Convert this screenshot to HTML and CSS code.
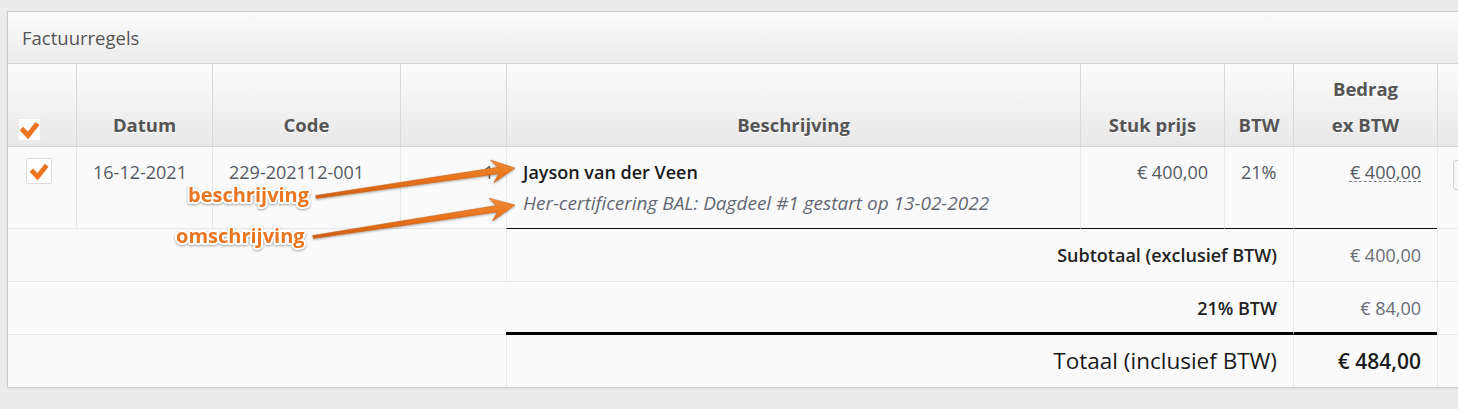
FILE: index.html
```html
<!DOCTYPE html>
<html lang="nl">
<head>
<meta charset="utf-8">
<title>Factuurregels</title>
<link rel="stylesheet" href="styles.css">
</head>
<body>
<div class="panel">
  <div class="panel-heading">Factuurregels</div>
  <table class="lines">
    <colgroup>
      <col class="w-check">
      <col class="w-date">
      <col class="w-code">
      <col class="w-qty">
      <col class="w-desc">
      <col class="w-price">
      <col class="w-vat">
      <col class="w-amount">
      <col class="w-actions">
    </colgroup>
    <thead>
      <tr>
        <th class="c-check"><span class="cb cb-head"><svg viewBox="0 0 23 23" width="23" height="23"><path d="M3.5 10.5 L10 17.5 L19.5 5.5" fill="none" stroke="#ec7420" stroke-width="5" stroke-linejoin="miter"/></svg></span></th>
        <th>Datum</th>
        <th>Code</th>
        <th></th>
        <th>Beschrijving</th>
        <th>Stuk prijs</th>
        <th>BTW</th>
        <th>Bedrag<br>ex BTW</th>
        <th class="c-actions"></th>
      </tr>
    </thead>
    <tbody>
      <tr class="line">
        <td class="c-check"><span class="cb cb-row"><svg viewBox="0 0 23 23" width="22" height="22"><path d="M3.5 10.5 L10 17.5 L19.5 5.5" fill="none" stroke="#ec7420" stroke-width="5" stroke-linejoin="miter"/></svg></span></td>
        <td>16-12-2021</td>
        <td>229-202112-001</td>
        <td class="num">1</td>
        <td class="desc end">
          <div class="desc-name">Jayson van der Veen</div>
          <div class="desc-note">Her-certificering BAL: Dagdeel #1 gestart op 13-02-2022</div>
        </td>
        <td class="num end">€ 400,00</td>
        <td class="end">21%</td>
        <td class="num end"><span class="dashed">€ 400,00</span></td>
        <td class="c-actions"><span class="btn-stub"></span></td>
      </tr>
      <tr class="sum">
        <td colspan="4" class="blank"></td>
        <td colspan="3" class="sum-label ruled">Subtotaal (exclusief BTW)</td>
        <td class="sum-value">€ 400,00</td>
        <td class="c-actions"></td>
      </tr>
      <tr class="sum vat">
        <td colspan="4" class="blank"></td>
        <td colspan="3" class="sum-label heavy">21% BTW</td>
        <td class="sum-value heavy">€ 84,00</td>
        <td class="c-actions"></td>
      </tr>
      <tr class="sum total">
        <td colspan="4" class="blank"></td>
        <td colspan="3" class="sum-label ruled">Totaal (inclusief BTW)</td>
        <td class="sum-value">€ 484,00</td>
        <td class="c-actions"></td>
      </tr>
    </tbody>
  </table>
</div>

<svg class="annotations" width="1458" height="409" viewBox="0 0 1458 409">
  <defs>
    <linearGradient id="arrowFill" x1="0" y1="0" x2="0" y2="1">
      <stop offset="0" stop-color="#f08a34"/>
      <stop offset="0.5" stop-color="#e8721c"/>
      <stop offset="1" stop-color="#cf5f12"/>
    </linearGradient>
    <filter id="soft" x="-10%" y="-30%" width="120%" height="160%">
      <feDropShadow dx="0" dy="1" stdDeviation="0.8" flood-color="#000" flood-opacity="0.35"/>
    </filter>
  </defs>
  <polygon filter="url(#soft)" fill="url(#arrowFill)" stroke="#c45a10" stroke-width="0.5"
    points="315.6,195.5 497.8,167.3 490.5,160 515,168 493.9,182.8 498.6,173.7 316.4,198.5"/>
  <polygon filter="url(#soft)" fill="url(#arrowFill)" stroke="#c45a10" stroke-width="0.5"
    points="312.6,235.5 496.3,205.5 489.1,198.2 515,205 492.5,221 497.3,211.9 313.4,238.5"/>
  <text class="label" x="188" y="202">beschrijving</text>
  <text class="label" x="176" y="243">omschrijving</text>
</svg>
</body>
</html>
```

FILE: styles.css
```css
html, body {
  margin: 0;
  height: 409px;
  overflow: hidden;
}

body {
  position: relative;
  background: #ececec;
  font-family: "Open Sans", "Liberation Sans", sans-serif;
  color: #555a63;
}

.panel {
  margin: 11px 0 0 7px;
  width: 1521px;
  border: 1px solid #cbcbcb;
  background: #fafafa;
  box-shadow: 0 1px 2px rgba(0, 0, 0, 0.08);
}

.panel-heading {
  height: 51px;
  padding-left: 14px;
  display: flex;
  align-items: center;
  font-size: 18.5px;
  color: #555;
  background: linear-gradient(#fbfbfb, #ececec);
  border-bottom: 1px solid #d0d0d0;
}

.lines {
  table-layout: fixed;
  width: 1519px;
  border-collapse: separate;
  border-spacing: 0;
}

.w-check { width: 68px; }
.w-date { width: 136px; }
.w-code { width: 188px; }
.w-qty { width: 106px; }
.w-desc { width: 574px; }
.w-price { width: 144px; }
.w-vat { width: 69px; }
.w-amount { width: 144px; }
.w-actions { width: 90px; }

th, td {
  box-sizing: border-box;
}

th {
  font-weight: 700;
  font-size: 18.5px;
  color: #555;
  text-shadow: 0 1px 0 #fff;
  line-height: 36px;
  padding: 7px 4px 3px;
  vertical-align: bottom;
  text-align: center;
  background: linear-gradient(#fcfcfc, #e8e8e8);
  border-left: 1px solid #d8d8e0;
  border-bottom: 1px solid #d3d3db;
}

th.c-check {
  border-left: none;
  text-align: left;
  padding: 0 0 5px 10px;
}

.cb {
  display: block;
  background: #fff;
  box-sizing: border-box;
}

.cb svg {
  display: block;
}

.cb-head {
  width: 23px;
  height: 23px;
  border: 1px solid #ececec;
}

.cb-head svg {
  margin: -1px;
}

.cb-row {
  width: 26px;
  height: 26px;
  border: 1px solid #dcdcdc;
  border-radius: 2px;
  padding: 1px;
}

td {
  font-size: 18px;
  line-height: 31px;
  padding: 10px 16px 9px;
  vertical-align: top;
  border-left: 1px solid #e6e6ec;
  border-bottom: 1px solid #e6e6ec;
  white-space: nowrap;
}

td.c-check {
  border-left: none;
  padding: 11px 0 0 18px;
}

td.num {
  text-align: right;
}

.line td.end {
  border-bottom-color: #111;
}

.line td.num:nth-child(4) {
  padding-right: 12px;
}

.desc-name {
  color: #1a1a1a;
  font-weight: 600;
  font-size: 18px;
}

.desc-note {
  font-style: italic;
  font-size: 19px;
  color: #646872;
}

.dashed {
  text-decoration: underline dashed #7a7e86;
  text-decoration-thickness: 1px;
  text-underline-offset: 2px;
}

.btn-stub {
  display: block;
  width: 50px;
  height: 30px;
  margin-top: 3px;
  box-sizing: border-box;
  border: 1px solid #cfcfcf;
  border-radius: 3px;
  background: #f7f7f7;
}

td.c-actions {
  padding-left: 15px;
  padding-right: 0;
}

.sum td {
  vertical-align: middle;
  padding-top: 10px;
  padding-bottom: 10px;
  line-height: 32px;
}

.sum td.blank {
  border-left: none;
}

.sum-label {
  text-align: right;
  font-weight: 600;
  color: #222;
  font-size: 18px;
}

.sum-value {
  text-align: right;
  color: #6a6e77;
}

.vat .sum-label {
  border-left: none;
}

.vat td.heavy {
  border-bottom: 3px solid #000;
  padding-bottom: 8px;
}

.total td {
  border-bottom: none;
}

.total .sum-label {
  font-weight: 500;
  font-size: 22.5px;
  color: #1a1a1a;
}

.total .sum-value {
  font-weight: 600;
  font-size: 21px;
  color: #1a1a1a;
}

.annotations {
  position: absolute;
  left: 0;
  top: 0;
  pointer-events: none;
}

.annotations .label {
  font-family: "Open Sans", "Liberation Sans", sans-serif;
  font-weight: 700;
  font-size: 20px;
  fill: #ea761f;
  stroke: #ffffff;
  stroke-width: 4px;
  stroke-linejoin: round;
  paint-order: stroke;
  filter: drop-shadow(0 1px 1px rgba(0, 0, 0, 0.35));
}
```
